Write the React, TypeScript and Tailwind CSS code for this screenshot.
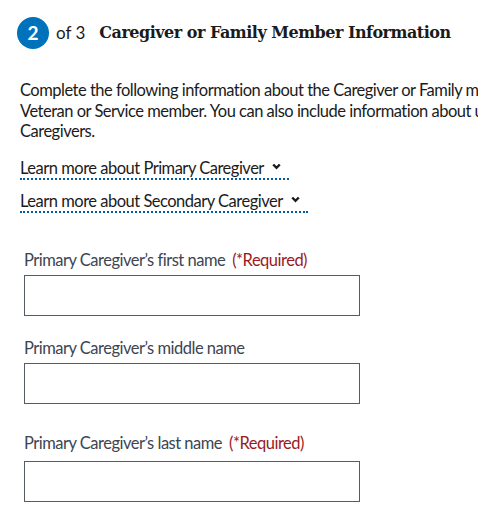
const sans = "font-['Lato','Open_Sans',sans-serif]";

function Chevron() {
  return (
    <svg
      width="9"
      height="7"
      viewBox="0 0 9 7"
      className="ml-[8px] mr-[8px] -mt-[2px] inline-block"
      aria-hidden="true"
    >
      <path d="M1.2 1.5 L4.5 4.8 L7.8 1.5" fill="none" stroke="#1b1b1b" strokeWidth="2.4" />
    </svg>
  );
}

function LearnMore({ label }: { label: string }) {
  return (
    <button
      type="button"
      className={`${sans} flex items-center border-b-2 border-dotted border-[#005ea2] text-[16.5px] leading-[20px] tracking-[-0.5px] text-[#1b1b1b]`}
    >
      {label}
      <Chevron />
    </button>
  );
}

function Field({
  label,
  required,
  className,
  gap,
}: {
  label: string;
  required?: boolean;
  className?: string;
  gap: string;
}) {
  return (
    <div className={`ml-[4px] ${className ?? ""}`}>
      <label
        className={`${sans} block text-[16.5px] leading-[22px] tracking-[-0.5px] text-[#3d4551] ${gap}`}
      >
        {label}
        {required && <span className="ml-[7px] text-[#981b1e]">(*Required)</span>}
      </label>
      <input
        type="text"
        className="block h-[41px] w-[336px] border border-[#565c65] bg-white"
      />
    </div>
  );
}

export default function App() {
  return (
    <div className="h-[531px] w-[478px] overflow-hidden bg-white">
      <div className="w-[680px] pl-[20px]">
        <div className="flex items-center pt-[17px]">
          <span className="-ml-[3px] flex h-[32px] w-[32px] items-center justify-center rounded-full bg-[#0071bb] font-['Lato',sans-serif] text-[19px] font-bold text-white">
            2
          </span>
          <span className={`${sans} ml-[7px] text-[17px] text-[#1b1b1b]`}>of 3</span>
          <h2 className="ml-[14px] font-['DejaVu_Serif',serif] text-[16px] font-bold tracking-[-0.5px] text-[#1b1b1b]">
            Caregiver or Family Member Information
          </h2>
        </div>

        <p
          className={`${sans} mt-[31px] text-[16.5px] leading-[20.5px] tracking-[-0.5px] text-[#1b1b1b]`}
        >
          Complete the following information about the Caregiver or Family member of the
          <br />
          Veteran or Service member. You can also include information about up to two Secondary
          <br />
          Caregivers.
        </p>

        <div className="mt-[16px] flex flex-col items-start gap-[11px]">
          <LearnMore label="Learn more about Primary Caregiver" />
          <LearnMore label="Learn more about Secondary Caregiver" />
        </div>

        <Field
          label="Primary Caregiver’s first name"
          required
          className="mt-[36px]"
          gap="mb-[4px]"
        />
        <Field label="Primary Caregiver’s middle name" className="mt-[21px]" gap="mb-[4px]" />
        <Field
          label="Primary Caregiver’s last name"
          required
          className="mt-[28px]"
          gap="mb-[7px]"
        />
      </div>
    </div>
  );
}
